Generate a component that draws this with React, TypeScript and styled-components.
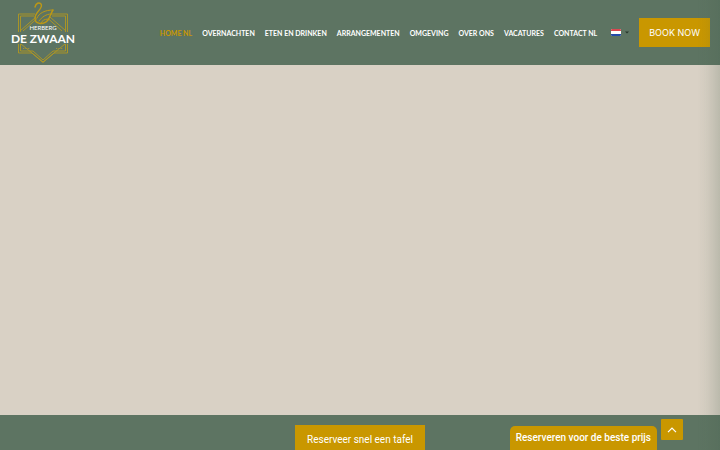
import React from "react";
import styled, { createGlobalStyle, css } from "styled-components";

const green = "#5d7462";
const gold = "#c99700";
const sand = "#d9d1c5";

const GlobalStyle = createGlobalStyle`
  * { box-sizing: border-box; }
  body { margin: 0; background: ${sand}; }
  button { border: 0; padding: 0; cursor: pointer; }
`;

const Page = styled.div`
  display: flex;
  flex-direction: column;
  min-height: 100vh;
  font-family: "Inter", sans-serif;
`;

const Header = styled.header`
  display: flex;
  align-items: center;
  padding: 0 10px;
  background: ${green};
`;

const LogoLink = styled.a`
  display: block;
  padding-top: 1px;
  svg { display: block; }
`;

const Nav = styled.nav`
  display: flex;
  align-items: center;
  gap: 10px;
  margin-left: auto;
`;

const NavLink = styled.a<{ $active?: boolean }>`
  color: ${(p) => (p.$active ? gold : "#fff")};
  font: 700 7px/12px "Lato", sans-serif;
  text-decoration: none;
  white-space: nowrap;
`;

const Language = styled.button`
  display: flex;
  align-items: center;
  justify-content: center;
  gap: 4px;
  width: 22px;
  height: 22px;
  margin: 0 8px 0 12px;
  background: transparent;
  svg { display: block; }
`;

const goldButton = css`
  background: ${gold};
  color: #fff;
  text-decoration: none;
  white-space: nowrap;
  text-align: center;
`;

const BookLink = styled.a`
  ${goldButton}
  padding: 8px 10px;
  font: 400 9px/13px "Inter", sans-serif;
`;

const Hero = styled.main`
  flex: 1;
  background: ${sand};
`;

const Footer = styled.footer`
  display: flex;
  justify-content: center;
  align-items: flex-start;
  height: 35px;
  padding-top: 10px;
  background: ${green};
`;

const TableLink = styled.a`
  ${goldButton}
  padding: 8px 12px 4px;
  font: 400 10px/13px "Roboto", sans-serif;
`;

const PriceLink = styled.a`
  ${goldButton}
  position: fixed;
  right: 63px;
  bottom: 0;
  padding: 6px;
  border-radius: 5px 5px 0 0;
  font: 500 10px/12px "Roboto", sans-serif;
`;

const TopButton = styled.button`
  ${goldButton}
  position: fixed;
  right: 37px;
  bottom: 10px;
  display: grid;
  place-items: center;
  width: 22px;
  height: 21px;
  border-radius: 1px;
`;

const EdgeShade = styled.div`
  position: fixed;
  top: 0;
  right: 0;
  bottom: 0;
  width: 22px;
  background: linear-gradient(to right, rgba(70, 95, 75, 0), rgba(70, 95, 75, 0.05) 40%, rgba(70, 95, 75, 0.2));
  pointer-events: none;
`;

const links = [
  "HOME NL",
  "OVERNACHTEN",
  "ETEN EN DRINKEN",
  "ARRANGEMENTEN",
  "OMGEVING",
  "OVER ONS",
  "VACATURES",
  "CONTACT NL",
];

function Logo() {
  return (
    <svg width="67" height="64" viewBox="10 1 67 64" role="img" aria-label="Herberg De Zwaan">
      <g fill="none" stroke="#b29720" strokeWidth="0.9">
        <path d="M35 14H18.500V32M18.500 44V53H32L43 62.500L54 53H67.500V44M67.500 32V14H51" />
        <path d="M34 16H20.500V32M20.500 44V51H33L43 60L53 51H65.500V44M65.500 32V16H52" />
        <path d="M20 31L36 17M23 31L37 18.500M50 17L66 31M48 18.500L62 31M21 44L43 62M65 44L43 62" />
      </g>
      <g fill="none" stroke="#bd9815" strokeLinecap="round">
        <path strokeWidth="1.400" d="M35 7C36 3 39 2 41 4C44 8 35 12 35 18C35 25 44 25 48 20C50 17 51 13 53 10" />
        <path strokeWidth="1" d="M53 10C45 10 39 13 37 18M51 14C46 14 42 17 39 21M48 19C44 19 42 21 41 23" />
      </g>
      <path d="M23 48.500H30M56 48.500H63" stroke="#a2933a" strokeWidth="1.200" strokeDasharray="1 .7" />
      <g fill="#fff" textAnchor="middle" fontFamily="Lato, sans-serif">
        <text x="43" y="30" fontSize="6" fontWeight="400">HERBERG</text>
        <text x="43" y="43" fontSize="12" fontWeight="700">DE ZWAAN</text>
      </g>
    </svg>
  );
}

export default function App() {
  return (
    <Page>
      <GlobalStyle />
      <Header>
        <LogoLink href="#home"><Logo /></LogoLink>
        <Nav aria-label="Hoofdmenu">
          {links.map((label, i) => (
            <NavLink key={label} href="#" $active={i === 0}>{label}</NavLink>
          ))}
        </Nav>
        <Language type="button" aria-label="Taal kiezen">
          <svg width="10" height="7" viewBox="0 0 10 7">
            <rect width="10" height="7" rx="1" fill="#fff" />
            <path d="M1 0H9Q10 0 10 1V2H0V1Q0 0 1 0" fill="#dc4650" />
            <path d="M0 5H10V6Q10 7 9 7H1Q0 7 0 6" fill="#244aa8" />
          </svg>
          <svg width="4" height="3" viewBox="0 0 4 3"><path d="M0 .5H4L2 2.500Z" fill="#26352b" /></svg>
        </Language>
        <BookLink href="#book">BOOK NOW</BookLink>
      </Header>
      <Hero />
      <Footer>
        <TableLink href="#tafel">Reserveer snel een tafel</TableLink>
      </Footer>
      <EdgeShade />
      <PriceLink href="#prijs">Reserveren voor de beste prijs</PriceLink>
      <TopButton type="button" aria-label="Naar boven">
        <svg width="10" height="6" viewBox="0 0 10 6"><path d="M1 5.200L5 1L9 5.200" fill="none" stroke="#fff" strokeWidth="1.200" /></svg>
      </TopButton>
    </Page>
  );
}
